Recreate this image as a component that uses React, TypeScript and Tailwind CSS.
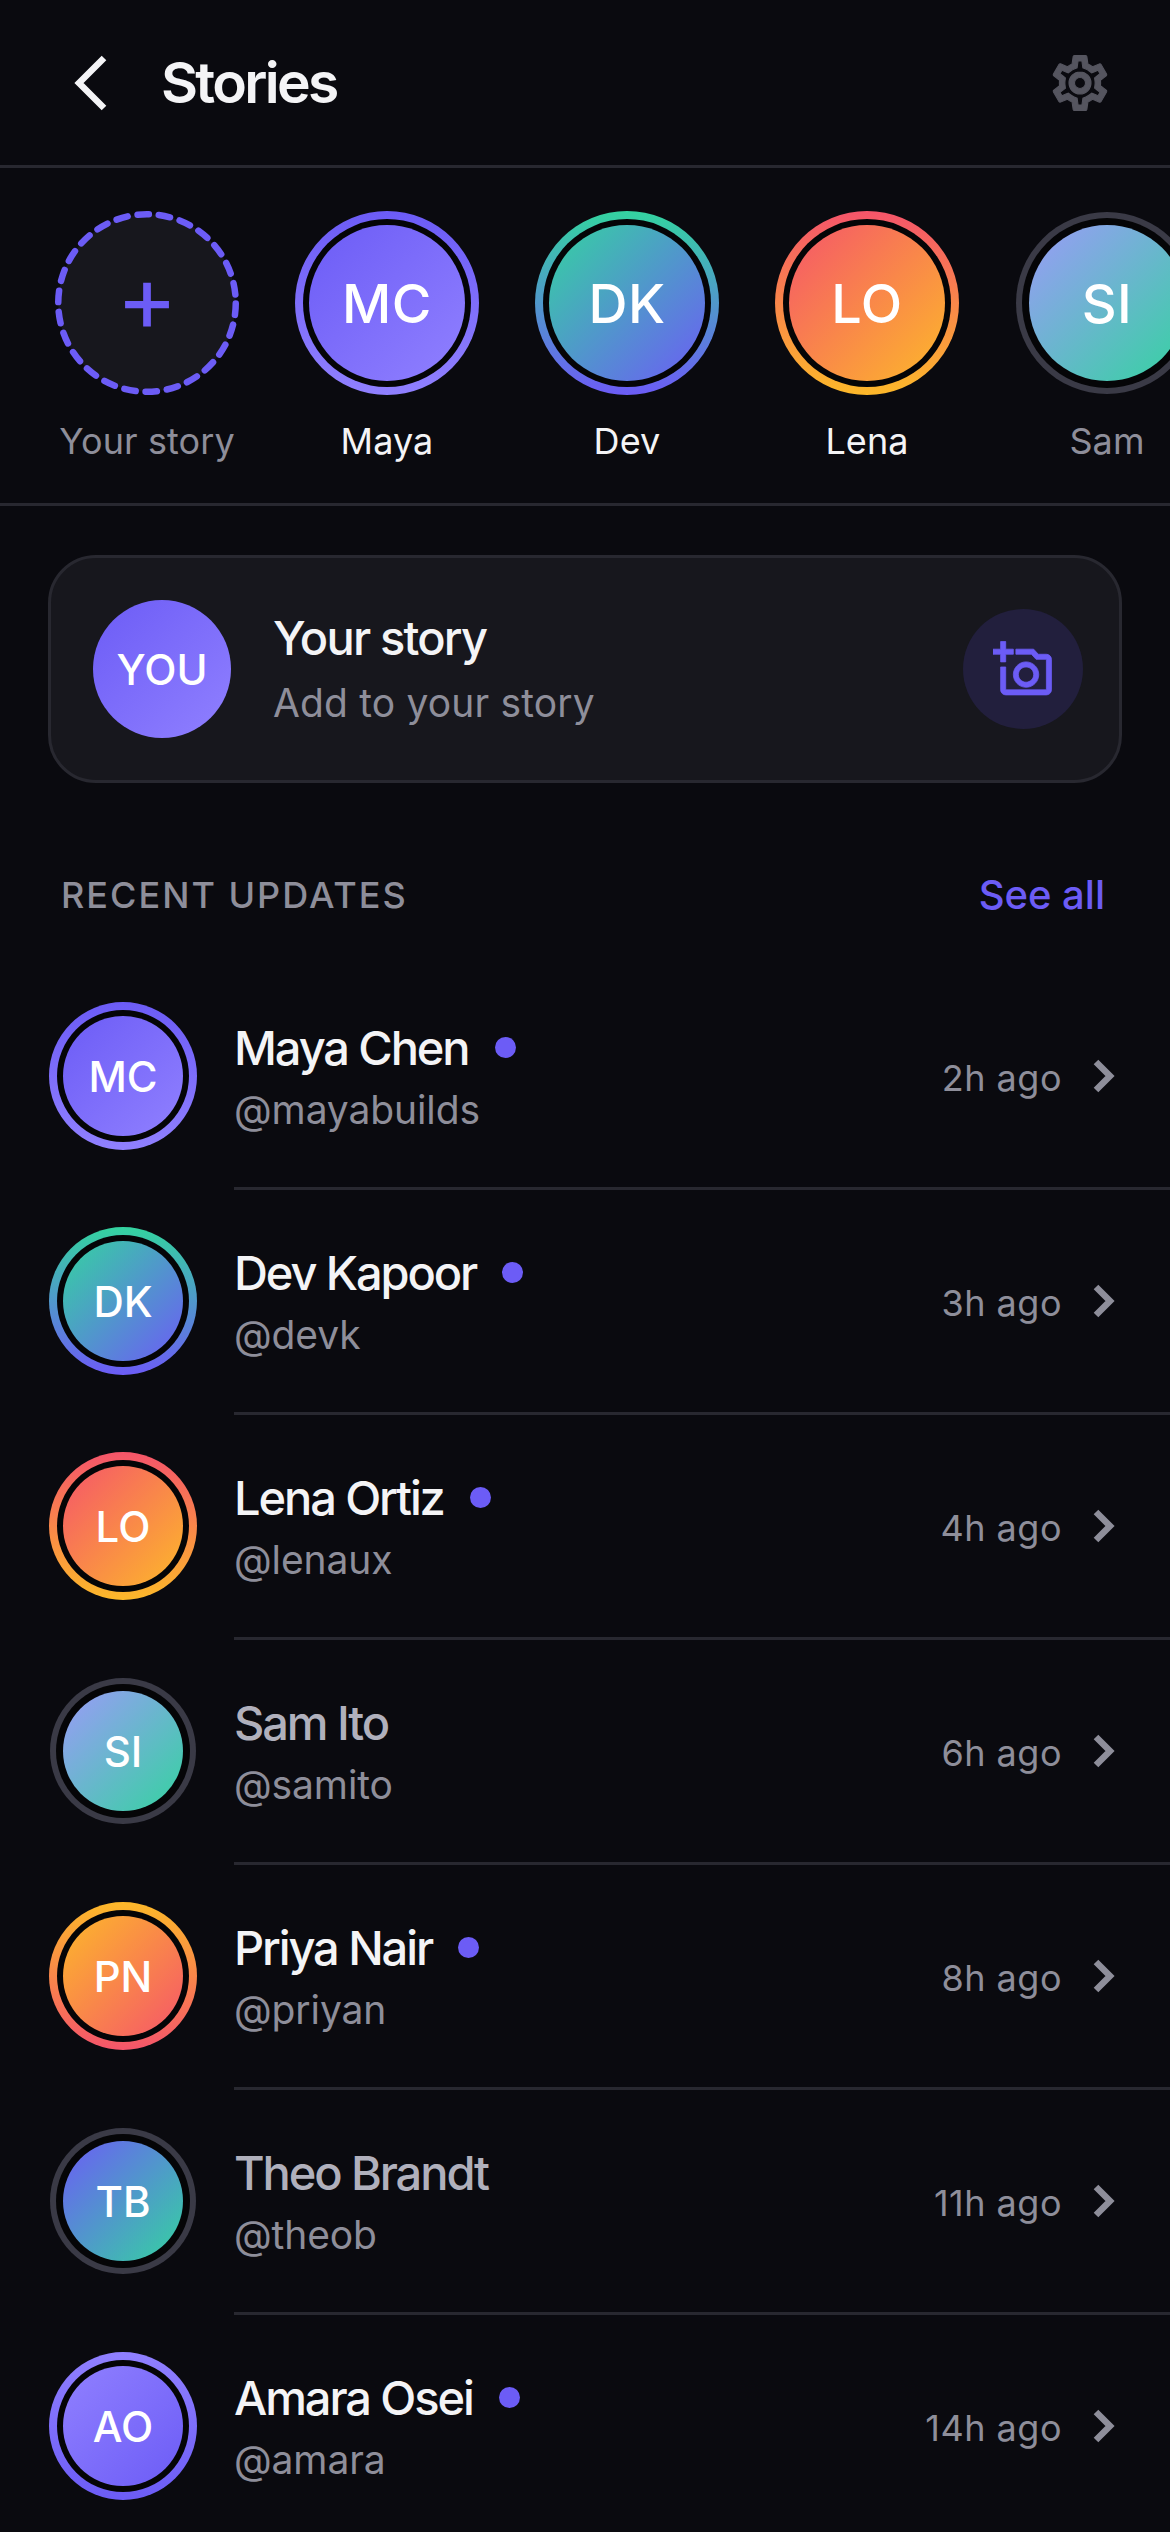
type Person = {
  initials: string;
  name: string;
  first: string;
  handle: string;
  time: string;
  fresh: boolean;
  ring: string;
  fill: string;
};

const people: Person[] = [
  {
    initials: "MC",
    name: "Maya Chen",
    first: "Maya",
    handle: "@mayabuilds",
    time: "2h ago",
    fresh: true,
    ring: "bg-[linear-gradient(180deg,#6c5cf6,#9080ff)]",
    fill: "bg-[linear-gradient(135deg,#6c5cf6,#9080ff)]",
  },
  {
    initials: "DK",
    name: "Dev Kapoor",
    first: "Dev",
    handle: "@devk",
    time: "3h ago",
    fresh: true,
    ring: "bg-[linear-gradient(180deg,#34d3a0,#6c5cf6)]",
    fill: "bg-[linear-gradient(135deg,#34d3a0,#6c5cf6)]",
  },
  {
    initials: "LO",
    name: "Lena Ortiz",
    first: "Lena",
    handle: "@lenaux",
    time: "4h ago",
    fresh: true,
    ring: "bg-[linear-gradient(180deg,#f5556a,#fdb82a)]",
    fill: "bg-[linear-gradient(135deg,#f5556a,#fdb82a)]",
  },
  {
    initials: "SI",
    name: "Sam Ito",
    first: "Sam",
    handle: "@samito",
    time: "6h ago",
    fresh: false,
    ring: "bg-[#3a3a46]",
    fill: "bg-[linear-gradient(135deg,#9b9bf8,#34d3a0)]",
  },
  {
    initials: "PN",
    name: "Priya Nair",
    first: "Priya",
    handle: "@priyan",
    time: "8h ago",
    fresh: true,
    ring: "bg-[linear-gradient(180deg,#fdb82a,#f5556a)]",
    fill: "bg-[linear-gradient(135deg,#fdb82a,#f5556a)]",
  },
  {
    initials: "TB",
    name: "Theo Brandt",
    first: "Theo",
    handle: "@theob",
    time: "11h ago",
    fresh: false,
    ring: "bg-[#3a3a46]",
    fill: "bg-[linear-gradient(135deg,#6c5cf6,#34d3a0)]",
  },
  {
    initials: "AO",
    name: "Amara Osei",
    first: "Amara",
    handle: "@amara",
    time: "14h ago",
    fresh: true,
    ring: "bg-[linear-gradient(180deg,#9080ff,#6c5cf6)]",
    fill: "bg-[linear-gradient(135deg,#9080ff,#6c5cf6)]",
  },
];

function Gear() {
  return (
    <svg width="66" height="66" viewBox="0 0 24 24" fill="#55555f" stroke="#55555f" strokeWidth="0.4">
      <path d="M19.43 12.98c.04-.32.07-.64.07-.98 0-.34-.03-.66-.07-.98l2.11-1.65c.19-.15.24-.42.12-.64l-2-3.46c-.09-.16-.26-.25-.44-.25-.06 0-.12.01-.17.03l-2.49 1c-.52-.4-1.08-.73-1.69-.98l-.38-2.65C14.46 2.18 14.25 2 14 2h-4c-.25 0-.46.18-.49.42l-.38 2.65c-.61.25-1.17.59-1.69.98l-2.49-1c-.06-.02-.12-.03-.18-.03-.17 0-.34.09-.43.25l-2 3.46c-.13.22-.07.49.12.64l2.11 1.65c-.04.32-.07.65-.07.98 0 .33.03.66.07.98l-2.11 1.65c-.19.15-.24.42-.12.64l2 3.46c.09.16.26.25.44.25.06 0 .12-.01.17-.03l2.49-1c.52.4 1.08.73 1.69.98l.38 2.65c.03.24.24.42.49.42h4c.25 0 .46-.18.49-.42l.38-2.65c.61-.25 1.17-.59 1.69-.98l2.49 1c.06.02.12.03.18.03.17 0 .34-.09.43-.25l2-3.46c.12-.22.07-.49-.12-.64l-2.11-1.65zm-1.98-1.71c.04.31.05.52.05.73 0 .21-.02.43-.05.73l-.14 1.13.89.7 1.08.84-.7 1.21-1.27-.51-1.04-.42-.9.68c-.43.32-.84.56-1.25.73l-1.06.43-.16 1.13-.2 1.35h-1.4l-.19-1.35-.16-1.13-1.06-.43c-.43-.18-.83-.41-1.23-.71l-.91-.7-1.06.43-1.27.51-.7-1.21 1.08-.84.89-.7-.14-1.13c-.03-.31-.05-.54-.05-.74s.02-.43.05-.73l.14-1.13-.89-.7-1.08-.84.7-1.21 1.27.51 1.04.42.9-.68c.43-.32.84-.56 1.25-.73l1.06-.43.16-1.13.2-1.35h1.39l.19 1.35.16 1.13 1.06.43c.43.18.83.41 1.23.71l.91.7 1.06-.43 1.27-.51.7 1.21-1.07.85-.89.7.14 1.13zM12 8c-2.21 0-4 1.79-4 4s1.79 4 4 4 4-1.79 4-4-1.79-4-4-4zm0 6c-1.1 0-2-.9-2-2s.9-2 2-2 2 .9 2 2-.9 2-2 2z" />
    </svg>
  );
}

function AddPhoto() {
  return (
    <svg width="61" height="61" viewBox="0 0 24 24" fill="#6c5cf6" stroke="#6c5cf6" strokeWidth="0.3">
      <path d="M21 6h-3.17L16 4H9v2h6.12l1.83 2H21v12H5v-9H3v9c0 1.1.9 2 2 2h16c1.1 0 2-.9 2-2V8c0-1.1-.9-2-2-2zM8 14c0 2.76 2.24 5 5 5s5-2.24 5-5-2.24-5-5-5-5 2.24-5 5zm5-3c1.65 0 3 1.35 3 3s-1.35 3-3 3-3-1.35-3-3 1.35-3 3-3zM5 9V6h3V4H5V1H3v3H0v2h3v3h2z" />
    </svg>
  );
}

function StoryAvatar({ person }: { person: Person }) {
  return (
    <div className="flex flex-col items-center w-[184px] shrink-0">
      <div className="flex items-center justify-center w-[184px] h-[184px]">
        <div className={`flex items-center justify-center rounded-full ${person.fresh ? "w-[184px] h-[184px] p-[8px]" : "w-[182px] h-[182px] p-[6px]"} ${person.ring}`}>
          <div className="flex items-center justify-center w-full h-full rounded-full bg-[#050507]">
            <div className={`flex items-center justify-center w-[156px] h-[156px] rounded-full text-white text-[54px] font-medium tracking-[0.5px] ${person.fill}`}>
              {person.initials}
            </div>
          </div>
        </div>
      </div>
      <span className={`mt-[24px] text-[36px] leading-[44px] tracking-[0.1px] ${person.fresh ? "text-[#f4f4f6]" : "text-[#8e8e9a]"}`}>
        {person.first}
      </span>
    </div>
  );
}

function Row({ person }: { person: Person }) {
  return (
    <div className="flex h-[225px] pl-[49px]">
      <div className="flex items-center justify-center w-[148px] h-[222px] shrink-0">
        <div className={`flex items-center justify-center rounded-full ${person.fresh ? "w-[148px] h-[148px] p-[8px]" : "w-[146px] h-[146px] p-[6px]"} ${person.ring}`}>
          <div className="flex items-center justify-center w-full h-full rounded-full bg-[#050507]">
            <div className={`flex items-center justify-center w-[120px] h-[120px] rounded-full text-white text-[42px] font-medium ${person.fill}`}>
              {person.initials}
            </div>
          </div>
        </div>
      </div>
      <div className="flex flex-1 items-center ml-[37px] pr-[54px] border-b-[3px] border-[#282830]">
        <div className="flex-1 mb-[1px]">
          <div className="flex items-center">
            <span className={`text-[47px] leading-[60px] font-medium tracking-[-2.1px] ${person.fresh ? "text-[#f4f4f6]" : "text-[#b0b0bc]"}`}>
              {person.name}
            </span>
            {person.fresh && <span className="w-[21px] h-[21px] ml-[26px] rounded-full bg-[#6c5cf6]" />}
          </div>
          <div className="mt-[8px] text-[39px] leading-[48px] tracking-[-0.1px] text-[#8e8e9a]">{person.handle}</div>
        </div>
        <span className="mt-[3px] text-[36px] leading-[48px] tracking-[0.5px] text-[#8e8e9a]">{person.time}</span>
        <svg className="ml-[30px]" width="24" height="36" viewBox="0 0 24 36" fill="none">
          <path d="M4 4L18 18L4 32" stroke="#8e8e9a" strokeWidth="6.5" />
        </svg>
      </div>
    </div>
  );
}

export default function App() {
  return (
    <div className="w-[1170px] h-[2532px] overflow-hidden bg-[#0a0a0f] [font-family:Inter,sans-serif]">
      <header className="flex items-center h-[168px] pl-[70px] pr-[57px] border-b-[3px] border-[#282830]">
        <svg width="40" height="60" viewBox="0 0 40 60" fill="none">
          <path d="M34 5L9 30L34 55" stroke="#f4f4f6" strokeWidth="6.5" />
        </svg>
        <h1 className="flex-1 ml-[51px] text-[57px] font-semibold tracking-[-2.7px] text-[#f4f4f6]">Stories</h1>
        <Gear />
      </header>

      <div className="flex gap-[56px] h-[338px] pt-[43px] pl-[55px] overflow-hidden border-b-[3px] border-[#282830]">
        <div className="flex flex-col items-center w-[184px] shrink-0">
          <div className="relative flex items-center justify-center w-[184px] h-[184px] pb-[12px] text-[93px] leading-none text-[#6c5cf6]">
            <svg className="absolute inset-0" width="184" height="184" viewBox="0 0 184 184">
              <circle
                cx="92"
                cy="92"
                r="88.75"
                fill="#17171d"
                stroke="#6c5cf6"
                strokeWidth="6.5"
                strokeLinecap="round"
                strokeDasharray="11.5 9.946"
                strokeDashoffset="-0.5"
              />
            </svg>
            <span className="relative">+</span>
          </div>
          <span className="mt-[24px] text-[36px] leading-[44px] tracking-[0.1px] text-[#8e8e9a]">Your story</span>
        </div>
        {people.slice(0, 4).map((person) => (
          <StoryAvatar key={person.initials} person={person} />
        ))}
      </div>

      <div className="flex items-center h-[228px] mt-[49px] mx-[48px] pl-[42px] pr-[36px] rounded-[48px] border-[3px] border-[#282830] bg-[#17171d]">
        <div className="flex items-center justify-center w-[138px] h-[138px] rounded-full bg-[linear-gradient(135deg,#6c5cf6,#9080ff)] text-white text-[42px] font-medium">
          YOU
        </div>
        <div className="flex-1 ml-[42px] mb-[2px]">
          <div className="text-[47px] leading-[56px] font-medium tracking-[-1.8px] text-[#f4f4f6]">Your story</div>
          <div className="mt-[13px] text-[39px] leading-[48px] tracking-[0.15px] text-[#8e8e9a]">Add to your story</div>
        </div>
        <div className="flex items-center justify-center w-[120px] h-[120px] rounded-full bg-[#221f3d]">
          <AddPhoto />
        </div>
      </div>

      <div className="flex items-start justify-between h-[182px] pt-[85px] pl-[61px] pr-[65px]">
        <span className="text-[36px] leading-[54px] font-medium tracking-[2px] text-[#8e8e9a]">RECENT UPDATES</span>
        <span className="text-[40px] leading-[54px] font-medium text-[#6c5cf6]">See all</span>
      </div>

      {people.map((person) => (
        <Row key={person.initials} person={person} />
      ))}
    </div>
  );
}
